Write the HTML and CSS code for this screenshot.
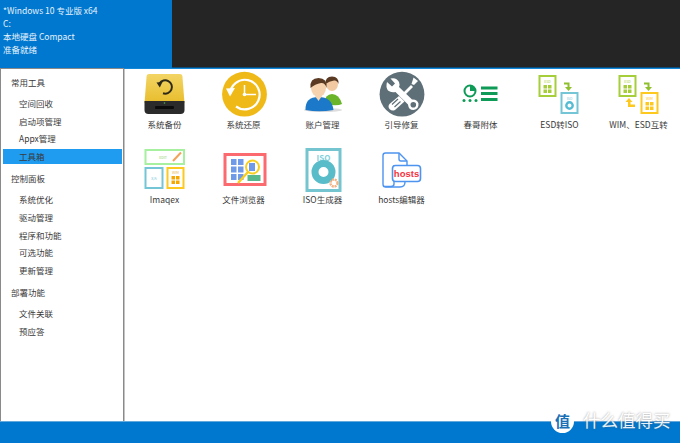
FILE: index.html
```html
<!DOCTYPE html>
<html lang="zh-CN">
<head>
    <meta charset="UTF-8">
    <title>工具箱</title>
    <link rel="stylesheet" href="styles.css">
</head>
<body>
    <div class="top">
        <div class="info">
            <div>*Windows 10 专业版 x64</div>
            <div>C:</div>
            <div>本地硬盘 Compact</div>
            <div>准备就绪</div>
        </div>
        <div class="top-dark"></div>
    </div>

    <div class="main">
        <div class="side">
            <div class="group">常用工具</div>
            <div class="list">
                <div class="link">空间回收</div>
                <div class="link">启动项管理</div>
                <div class="link">Appx管理</div>
                <div class="link active">工具箱</div>
            </div>
            <div class="group">控制面板</div>
            <div class="list">
                <div class="link">系统优化</div>
                <div class="link">驱动管理</div>
                <div class="link">程序和功能</div>
                <div class="link">可选功能</div>
                <div class="link">更新管理</div>
            </div>
            <div class="group">部署功能</div>
            <div class="list">
                <div class="link">文件关联</div>
                <div class="link">预应答</div>
            </div>
        </div>

        <div class="tools">
            <div class="tool">
                <svg class="icon" viewBox="0 0 44 44">
                    <defs>
                        <linearGradient id="hdd" x1="0" y1="0" x2="0" y2="1">
                            <stop offset="0" stop-color="#f3d565"/>
                            <stop offset="1" stop-color="#e8bd2c"/>
                        </linearGradient>
                    </defs>
                    <path d="M6 1h31q2 0 2.400 2L41.500 30H1.500L3.600 3Q4 1 6 1z" fill="url(#hdd)"/>
                    <path d="M1.500 28H41.500V37Q41.500 41 37.500 41H5.500Q1.500 41 1.500 37z" fill="#2b2b2b"/>
                    <rect x="12" y="33" width="19" height="3" rx="1" fill="#0c0c0c"/>
                    <path d="M16.500 10.500A6.700 6.700 0 1 1 20 20.300" fill="none" stroke="#2e2a1a" stroke-width="2"/>
                    <path d="M13.500 9.500L19.500 9 16.800 14.500z" fill="#2e2a1a"/>
                    <circle cx="21.500" cy="30" r=".8" fill="#4caf50"/>
                </svg>
                <div class="name">系统备份</div>
            </div>
            <div class="tool">
                <svg class="icon" viewBox="0 0 44 44">
                    <circle cx="22.500" cy="21.200" r="22.400" fill="#efb917"/>
                    <path d="M8 21.500A14.800 14.800 0 1 1 14 33.500" fill="none" stroke="#fff" stroke-width="2.200"/>
                    <path d="M4 15.500L13 15 8 23.500z" fill="#fff"/>
                    <path d="M22.500 12V21.500H34" fill="none" stroke="#fff" stroke-width="1.500"/>
                    <circle cx="22.500" cy="21.500" r="1.800" fill="#fff"/>
                </svg>
                <div class="name">系统还原</div>
            </div>
            <div class="tool">
                <svg class="icon" viewBox="0 0 44 44">
                    <ellipse cx="22" cy="37" rx="19" ry="2" fill="#ddd"/>
                    <path d="M23 31Q24 21 31 21T41 31Q36 33.500 23 31z" fill="#6ab42a"/>
                    <ellipse cx="31" cy="11" rx="6" ry="7" fill="#f2c9a0"/>
                    <path d="M24.500 11Q24 3.500 31 3.500T37.500 11Q36 7 33 7.500 28 8 24.500 11z" fill="#5b3a24"/>
                    <path d="M4.500 37Q4 24 17.500 24T32.500 37Q18 39.500 4.500 37z" fill="#1c78c8"/>
                    <path d="M14 23H21L17.500 28z" fill="#f6d3ae"/>
                    <ellipse cx="17.500" cy="15" rx="7.500" ry="9" fill="#f6d3ae"/>
                    <path d="M9.500 15Q8.500 5 17.500 5T25.500 15Q24 9.500 20 10 14 11 9.500 15z" fill="#5b3a24"/>
                </svg>
                <div class="name">账户管理</div>
            </div>
            <div class="tool">
                <svg class="icon" viewBox="0 0 44 44">
                    <circle cx="22" cy="21.200" r="22.400" fill="#5f6f77"/>
                    <path d="M7 9L12 13.500 15 10.500 10.500 5.500Q16.500 4 19 9 20 11.500 19 14L32 26.500Q37 26 38.500 30.500 39 36 33.500 37 28.500 37 28 31.500L15.500 19Q11 20 8 17.500 5.500 14 7 9z" fill="#fff"/>
                    <circle cx="33.300" cy="31.700" r="2.800" fill="#5f6f77"/>
                    <path d="M33.500 4.500L38 8 34 12 31.500 11z" fill="#fff"/>
                    <path d="M31 12L33 14 22 25 20 23z" fill="#fff"/>
                    <path d="M19 23L24.500 28.500 15 37Q12 38.500 9.500 36 7.500 33.500 9.500 31z" fill="#fff"/>
                    <path d="M12 31.500L18 26M14.500 34L20.500 28.500" stroke="#5f6f77" stroke-width="1.200"/>
                </svg>
                <div class="name">引导修复</div>
            </div>
            <div class="tool">
                <svg class="icon" viewBox="0 0 44 44">
                    <circle cx="11" cy="18" r="5.500" fill="none" stroke="#0e9a57" stroke-width="2"/>
                    <path d="M11 18V12.500A5.500 5.500 0 0 1 16.500 18z" fill="#0e9a57"/>
                    <g fill="#0e9a57">
                        <circle cx="5" cy="27.500" r="1.500"/>
                        <circle cx="11" cy="27.500" r="1.500"/>
                        <circle cx="17" cy="27.500" r="1.500"/>
                        <rect x="22" y="13.500" width="16.500" height="3"/>
                        <rect x="22" y="19" width="16.500" height="3"/>
                        <rect x="22" y="25" width="16.500" height="3"/>
                    </g>
                </svg>
                <div class="name">春哥附体</div>
            </div>
            <div class="tool">
                <svg class="icon" viewBox="0 0 44 44">
                    <rect x="1.500" y="3" width="16" height="20" fill="#fff" stroke="#a6cd3a" stroke-width="2"/>
                    <text x="9.500" y="9.500" class="tiny" fill="#a6cd3a">ESD</text>
                    <path d="M5.500 12h3.500v3.500H5.500zM10 12h3.500v3.500H10zM5.500 16.500h3.500V20H5.500zM10 16.500h3.500V20H10z" fill="#a6cd3a"/>
                    <path d="M26 9.500H31.500V14H34L30.500 18 27 14H29.500V11.500H26z" fill="#8fbf2d"/>
                    <rect x="23.500" y="20" width="16" height="20" fill="#fff" stroke="#74c5d6" stroke-width="2"/>
                    <text x="31.500" y="26.500" class="tiny" fill="#74c5d6">ISO</text>
                    <circle cx="31.500" cy="32.500" r="3.200" fill="none" stroke="#55bcd2" stroke-width="2.400"/>
                </svg>
                <div class="name">ESD转ISO</div>
            </div>
            <div class="tool">
                <svg class="icon" viewBox="0 0 44 44">
                    <rect x="2.500" y="3" width="16" height="20" fill="#fff" stroke="#a6cd3a" stroke-width="2"/>
                    <text x="10.500" y="9.500" class="tiny" fill="#a6cd3a">ESD</text>
                    <path d="M6.500 12h3.500v3.500H6.500zM11 12h3.500v3.500H11zM6.500 16.500h3.500V20H6.500zM11 16.500h3.500V20H11z" fill="#a6cd3a"/>
                    <path d="M27 9.500H32.500V14H35L31.500 18 28 14H30.500V11.500H27z" fill="#8fbf2d"/>
                    <rect x="24.500" y="20" width="16" height="20" fill="#fff" stroke="#fdc91e" stroke-width="2"/>
                    <text x="32.500" y="26.500" class="tiny" fill="#fdc91e">WIM</text>
                    <path d="M28.500 29h3.500v3.500h-3.500zM33 29h3.500v3.500H33zM28.500 33.500h3.500V37h-3.500zM33 33.500h3.500V37H33z" fill="#fdc91e"/>
                    <path d="M12 25L15.500 29H13.500V31.500H18V34H11V29H8.500z" fill="#fdc91e"/>
                </svg>
                <div class="name">WIM、ESD互转</div>
            </div>
            <div class="tool">
                <svg class="icon" viewBox="0 0 44 44">
                    <rect x="2.500" y="2" width="38.500" height="14" fill="#fff" stroke="#a6f0a0" stroke-width="2"/>
                    <text x="20" y="11" class="tiny" fill="#8ccf6a">EDIT</text>
                    <path d="M30 13L38 4.500" stroke="#f2a35a" stroke-width="2"/>
                    <rect x="2.500" y="20" width="17" height="20" fill="#fff" stroke="#74c5d6" stroke-width="2"/>
                    <text x="11" y="32" class="tiny" fill="#74c5d6">X/A</text>
                    <rect x="24.500" y="20" width="16" height="20" fill="#fff" stroke="#fdc91e" stroke-width="2"/>
                    <text x="32.500" y="26" class="tiny" fill="#e6b84c">WIM</text>
                    <path d="M28.500 28h3.500v3.500h-3.500zM33 28h3.500v3.500H33zM28.500 32.500h3.500V36h-3.500zM33 32.500h3.500V36H33z" fill="#f6a800"/>
                </svg>
                <div class="name">Imaqex</div>
            </div>
            <div class="tool">
                <svg class="icon" viewBox="0 0 44 44">
                    <rect x="3" y="6.500" width="40" height="30" fill="#fff" stroke="#fb6a6e" stroke-width="3"/>
                    <g fill="#6f9ae8">
                        <rect x="9" y="11" width="5.500" height="6"/>
                        <rect x="16" y="11" width="5.500" height="6"/>
                        <rect x="9" y="18.500" width="5.500" height="6"/>
                        <rect x="16" y="18.500" width="5.500" height="6"/>
                        <rect x="9" y="26" width="5.500" height="6"/>
                        <rect x="16" y="26" width="5.500" height="6"/>
                        <rect x="27" y="15" width="6" height="8"/>
                    </g>
                    <rect x="25.500" y="27" width="13" height="6" fill="#5ab98c"/>
                    <circle cx="30.500" cy="19" r="6.500" fill="none" stroke="#f8cf1e" stroke-width="2"/>
                    <path d="M26 24L16 35" stroke="#f8cf1e" stroke-width="2.400"/>
                </svg>
                <div class="name">文件浏览器</div>
            </div>
            <div class="tool">
                <svg class="icon" viewBox="0 0 44 44">
                    <rect x="6" y="1.500" width="33" height="41" fill="#fff" stroke="#74c5d0" stroke-width="3"/>
                    <text x="22.500" y="13" class="iso">ISO</text>
                    <circle cx="22.500" cy="24" r="8.500" fill="none" stroke="#58bcc9" stroke-width="7"/>
                    <circle cx="33" cy="35" r="3.500" fill="none" stroke="#f4b183" stroke-width="2.400" stroke-dasharray="2 .8"/>
                </svg>
                <div class="name">ISO生成器</div>
            </div>
            <div class="tool">
                <svg class="icon" viewBox="0 0 44 44">
                    <path d="M14 17V36Q14 38.500 11 38.500H5.500Q3 38.500 3 36V7.500Q3 5 5.500 5H19L27 13V17" fill="none" stroke="#4d94f0" stroke-width="1.400"/>
                    <path d="M3.500 37.500Q3 39 6 39H20Q25 39 25 34" fill="none" stroke="#4d94f0" stroke-width="1.400"/>
                    <path d="M19 5V11Q19 13 21 13H27" fill="none" stroke="#4d94f0" stroke-width="1.400"/>
                    <rect x="12.500" y="17.500" width="28" height="16" rx="3" fill="#fff" stroke="#4d94f0" stroke-width="1.600"/>
                    <text x="26.500" y="29" class="hosts">hosts</text>
                </svg>
                <div class="name">hosts编辑器</div>
            </div>
        </div>
    </div>

    <div class="bottom"></div>

    <!-- 水印 -->
    <div class="mark">
        <span class="mark-logo">值</span>
        <span class="mark-text">什么值得买</span>
    </div>
</body>
</html>
```

FILE: styles.css
```css
body {
    margin: 0;
    width: 680px;
    height: 443px;
    overflow: hidden;
    position: relative;
    background-color: #0078cf;
    font-family: "Noto Sans CJK SC", "Noto Sans", sans-serif;
    font-size: 8.5px;
    color: #3a3a3a;
}

.top {
    display: flex;
    height: 68px;
}

.info {
    width: 172px;
    box-sizing: border-box;
    padding: 3.500px 0 0 3px;
    color: #e6f2fb;
    line-height: 13.300px;
}

.top-dark {
    flex: 1;
    background-color: #252525;
    border-bottom: 1px solid #0a4d7d;
}

.main {
    display: flex;
    height: 354px;
    box-sizing: border-box;
    background-color: #fff;
    border-bottom: 1px solid #64a8dc;
}

.side {
    width: 124px;
    flex: none;
    box-sizing: border-box;
    padding-top: 6px;
    background-color: #fff;
    border-left: 1px solid #8a8a8a;
    border-right: 1px solid #8a8a8a;
    border-top: 1px solid #8a8a8a;
    box-shadow: 1px 0 0 #c4c4c4;
}

.group {
    height: 14px;
    line-height: 14px;
    padding-left: 10px;
}

.list {
    padding: 6px 0 5.500px 2px;
}

.link {
    height: 17.700px;
    line-height: 17.700px;
    padding-left: 16px;
}

.link.active {
    background-color: #1f9bef;
    height: 15px;
    line-height: 15px;
    margin: 1px 1px 1.700px 0;
}

.tools {
    flex: 1;
    display: flex;
    flex-wrap: wrap;
    align-content: flex-start;
    padding: 4px 0 0 1px;
    border-top: 1px solid #1488d8;
}

.tool {
    width: 79px;
    height: 75px;
    display: flex;
    flex-direction: column;
    align-items: center;
}

.icon {
    width: 44px;
    height: 44px;
    overflow: visible;
}

.name {
    height: 16px;
    line-height: 16px;
    margin-top: -1px;
    white-space: nowrap;
}

.tiny {
    font-size: 3.500px;
    text-anchor: middle;
}

.iso {
    font-size: 8px;
    font-weight: bold;
    fill: #7fd0dc;
    text-anchor: middle;
}

.hosts {
    font-family: "Liberation Sans", sans-serif;
    font-size: 9.500px;
    font-weight: bold;
    fill: #f5333f;
    text-anchor: middle;
}

.mark {
    position: absolute;
    left: 551px;
    top: 410px;
    display: flex;
    align-items: center;
    gap: 9px;
    color: #fff;
    text-shadow: 0 0 2px rgba(90, 90, 90, 0.7);
}

.mark-logo {
    width: 23px;
    height: 23px;
    border-radius: 50%;
    background-color: #fff;
    color: #1b6fb5;
    font-size: 15px;
    font-weight: bold;
    line-height: 22px;
    text-align: center;
    text-shadow: none;
}

.mark-text {
    font-size: 17.500px;
    line-height: 20px;
    margin-top: -3px;
    opacity: 0.9;
}
```
